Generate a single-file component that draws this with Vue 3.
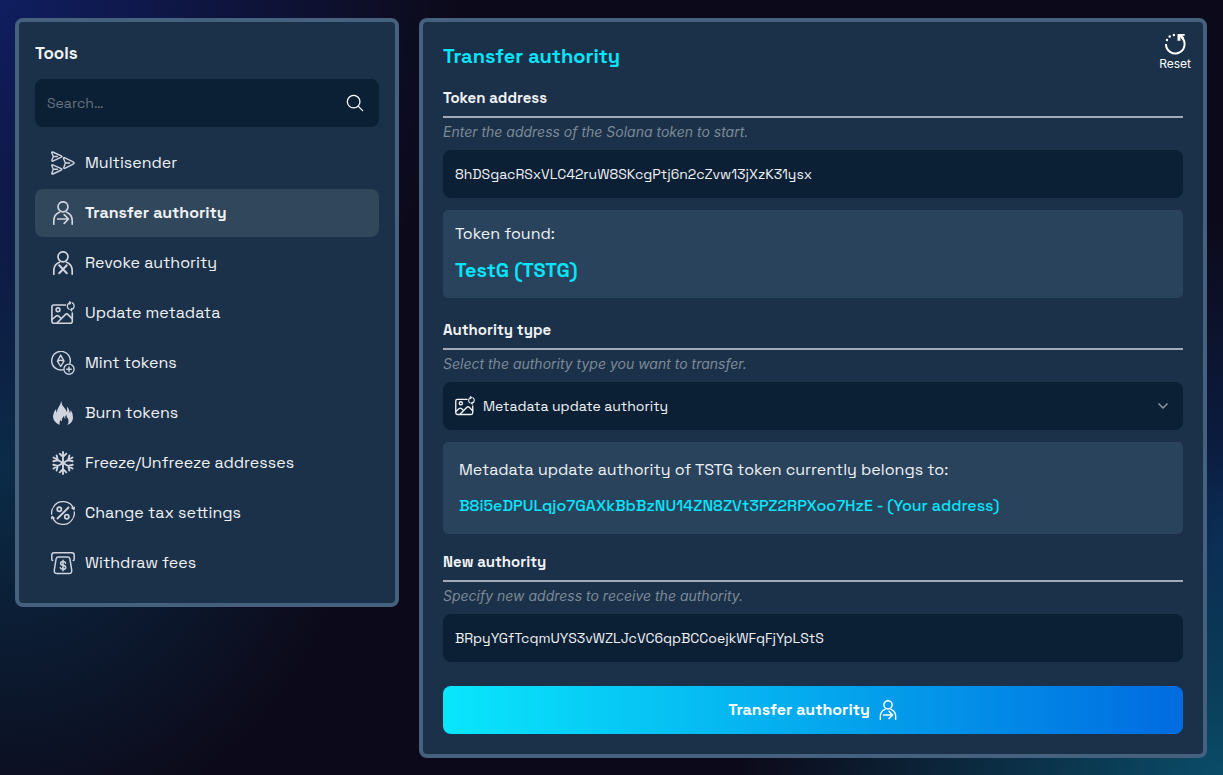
<script setup>
import { ref } from 'vue'

const tools = [
  { name: 'Multisender', icon: 'send' },
  { name: 'Transfer authority', icon: 'transfer' },
  { name: 'Revoke authority', icon: 'revoke' },
  { name: 'Update metadata', icon: 'image' },
  { name: 'Mint tokens', icon: 'mint' },
  { name: 'Burn tokens', icon: 'burn' },
  { name: 'Freeze/Unfreeze addresses', icon: 'freeze' },
  { name: 'Change tax settings', icon: 'tax' },
  { name: 'Withdraw fees', icon: 'withdraw' }
]
const active = ref('Transfer authority')
const search = ref('')
const token = ref('8hDSgacRSxVLC42ruW8SKcgPtj6n2cZvw13jXzK31ysx')
const authority = ref('Metadata update authority')
const newAuthority = ref('BRpyYGfTcqmUYS3vWZLJcVC6qpBCCoejkWFqFjYpLStS')
</script>

<template>
  <svg class="sprite" aria-hidden="true">
    <symbol id="send" viewBox="0 0 24 24">
      <g fill="none" stroke="currentColor" stroke-width="1.4" stroke-linejoin="round" stroke-linecap="round">
        <path d="M1.700 1 10.300 4.800q1.200.7 0 1.400L1.900 10.200Q.6 10.500.9 9.200L2.300 5.500.8 2Q.6.6 1.700 1ZM2.300 5.500h4.200" />
        <path d="M1.700 13.800 10.300 17.600q1.200.7 0 1.400L1.900 23Q.6 23.300.9 22L2.300 18.300.8 14.800q-.2-1.400.9-1ZM2.300 18.300h4.200" />
        <path d="M13.500 6.600 22.600 11.200q1.100.8 0 1.600L13.800 17.400q-1.300.3-1-1L14.400 12 12.600 7.800q-.3-1.500.9-1.200ZM14.400 12h4.200" />
      </g>
    </symbol>
    <symbol id="transfer" viewBox="0 0 24 24">
      <g fill="none" stroke="currentColor" stroke-width="1.700" stroke-linecap="round" stroke-linejoin="round">
        <circle cx="12" cy="5.800" r="5" />
        <path d="M2.800 23.200v-3.200Q2.800 13.300 8.400 11.300M15.600 11.300Q21.200 13.300 21.200 20v3.200M6.700 18h10.600M13.200 13.600l4.300 4.400-4.300 4.300" />
      </g>
    </symbol>
    <symbol id="revoke" viewBox="0 0 24 24">
      <g fill="none" stroke="currentColor" stroke-width="1.700" stroke-linecap="round" stroke-linejoin="round">
        <circle cx="12" cy="5.800" r="5" />
        <path d="M2.800 23.200v-3.200Q2.800 13.300 8.400 11.300M15.600 11.300Q21.200 13.300 21.200 20v3.200" />
        <path d="m8.200 14.200 7.600 8M15.800 14.200l-7.600 8" stroke-width="2" />
      </g>
    </symbol>
    <symbol id="image" viewBox="0 0 24 24">
      <g fill="none" stroke="currentColor" stroke-width="1.600" stroke-linejoin="round" stroke-linecap="round">
        <path d="M14.500 4H2.800Q.9 4 .9 6v14.200q0 2 2 2h16.400q2 0 2-2V12" />
        <circle cx="7" cy="8.800" r="1.900" />
        <path d="m1 18.500 4-3.400q1.300-1 2.600 0l2.400 2M6 22l8.300-8.400q1.400-1.300 2.800 0l4 4" />
        <path d="M18 8.300a3.800 3.800 0 0 1 .9-6.700M21.400 1.900a3.800 3.800 0 0 1-.9 6.800M18.700.7l1 1-1 1.400M20.700 9.900l-1-1.200 1.200-1.200" stroke-width="1.300" />
      </g>
    </symbol>
    <symbol id="mint" viewBox="0 0 24 24">
      <g fill="none" stroke="currentColor" stroke-width="1.400" stroke-linejoin="round" stroke-linecap="round">
        <path d="M18.900 12.300A9.300 9.300 0 1 0 12.600 18.600" />
        <circle cx="18" cy="18.200" r="5.100" />
        <path d="M18 15.900v4.600M15.700 18.200h4.600M9.700 4.200l-3.300 6 3.300 5.300 3.300-5.300ZM6.700 10.200l3-1 3 1" />
      </g>
    </symbol>
    <symbol id="burn" viewBox="0 0 24 24">
      <path fill="currentColor" d="M10.200 0q.1 4 3.700 7.600 1.500 1.700 1.800 3.600.8-2.600.2-5.800 2.600 2.300 3 6.500.8-1.100.8-3.200Q22 12.500 22 16.500q0 5.200-5.600 7.500 2.100-3.700.3-6.700-1.200-1.200-1.200-3.500-1.500 1.100-1.300 4.200-1-1-1.200-3.200-2.600 3.200-2.300 5.600-.9-.5-1.200-1.700-1.500 2.500-.9 5.300Q2 21 2 15.200q0-3.800 3-7.200.1 2.500.9 4Q6 8.500 8 5.600 9.700 3.300 10.200 0Z" />
    </symbol>
    <symbol id="freeze" viewBox="0 0 24 24">
      <g fill="none" stroke="currentColor" stroke-width="1.900" stroke-linecap="round">
        <g id="flake-axis"><path d="M12 1v22M8.700 2.700 12 6l3.300-3.300M8.700 21.300 12 18l3.300 3.300" /></g>
        <use href="#flake-axis" transform="rotate(60 12 12)" />
        <use href="#flake-axis" transform="rotate(120 12 12)" />
      </g>
    </symbol>
    <symbol id="tax" viewBox="0 0 24 24">
      <g fill="none" stroke="currentColor" stroke-width="1.300" stroke-linecap="round" stroke-linejoin="round">
        <path d="M2.300 6.300a11.300 11.300 0 0 1 20.500 1.900M21.700 17.700A11.300 11.300 0 0 1 1.200 15.800M.7 13.200Q.3 10 1.500 7.700M23.300 10.800q.4 3.300-.9 5.600M20.900 6.900l2 1.600.8-2.300M3.100 17.100l-2-1.600-.8 2.200" />
        <path d="M17.500 6.500 6.500 17.500" stroke-width="1.800" />
        <circle cx="8.300" cy="8.300" r="2.100" stroke-width="1.700" />
        <circle cx="15.800" cy="15.800" r="2.100" stroke-width="1.700" />
      </g>
    </symbol>
    <symbol id="withdraw" viewBox="0 0 24 24">
      <g fill="none" stroke="currentColor" stroke-width="1.500" stroke-linecap="round" stroke-linejoin="round">
        <path d="M1.700 9.500Q.8 9.500.8 8V4.200q0-2.400 2.400-2.400h17.600q2.400 0 2.400 2.400V8q0 1.500-1 1.500M7.400 6h9.200q1.900 0 2.300 1.800l1.800 11.300q.4 3.400-2.800 3.400H6.100q-3.200 0-2.800-3.400L5.100 7.800Q5.500 6 7.400 6Z" />
        <path d="M14.600 12.100q-.6-1.500-2.600-1.500-2.400 0-2.400 1.800 0 1.500 2.400 1.900 2.700.4 2.700 2.100 0 1.900-2.700 1.900-2.200 0-2.700-1.700M12 9.300v10.400" />
      </g>
    </symbol>
  </svg>

  <div class="page">
    <aside class="card tools">
      <h2>Tools</h2>
      <div class="field search">
        <input v-model="search" type="text" placeholder="Search…" aria-label="Search tools" />
        <svg viewBox="0 0 20 20" aria-hidden="true">
          <circle cx="8.500" cy="8.500" r="7" />
          <path d="m13.500 13.500 5 5" />
        </svg>
      </div>
      <nav>
        <a
          v-for="t in tools"
          :key="t.name"
          href="#"
          :class="{ active: t.name === active }"
          @click.prevent="active = t.name"
        >
          <svg aria-hidden="true"><use :href="'#' + t.icon" /></svg>
          <span>{{ t.name }}</span>
        </a>
      </nav>
    </aside>

    <main class="card">
      <h1>Transfer authority</h1>
      <button class="reset" type="button">
        <svg viewBox="0 0 24 24" aria-hidden="true">
          <path class="arc" d="M3 12a9.300 9.300 0 1 0 15.800-6.500" />
          <path class="fill" d="M14.500 2h7.200v1.800h-2.300l2 2.200-1.500 1.600-2.500-2.400v3.600h-2.900Z" />
          <circle class="fill" cx="4" cy="8" r="1.200" />
          <circle class="fill" cx="6.700" cy="4.500" r="1.200" />
          <circle class="fill" cx="10.900" cy="3" r="1.200" />
        </svg>
        <span>Reset</span>
      </button>

      <section>
        <label class="heading" for="token">Token address</label>
        <p class="hint">Enter the address of the Solana token to start.</p>
        <div class="field"><input id="token" v-model="token" type="text" /></div>
        <div class="info found">
          <p>Token found:</p>
          <strong>TestG (TSTG)</strong>
        </div>
      </section>

      <section>
        <label class="heading" for="type">Authority type</label>
        <p class="hint">Select the authority type you want to transfer.</p>
        <div class="field select">
          <svg class="kind" aria-hidden="true"><use href="#image" /></svg>
          <select id="type" v-model="authority">
            <option>Metadata update authority</option>
            <option>Mint authority</option>
            <option>Freeze authority</option>
          </select>
          <svg class="chevron" viewBox="0 0 12 12" aria-hidden="true"><path d="m1.500 3.500 4.500 4.500 4.500-4.500" /></svg>
        </div>
        <div class="info owner">
          <p>Metadata update authority of TSTG token currently belongs to:</p>
          <strong>B8i5eDPULqjo7GAXkBbBzNU14ZN8ZVt3PZ2RPXoo7HzE - (Your address)</strong>
        </div>
      </section>

      <section>
        <label class="heading" for="new">New authority</label>
        <p class="hint">Specify new address to receive the authority.</p>
        <div class="field"><input id="new" v-model="newAuthority" type="text" /></div>
      </section>

      <button class="submit" type="button">
        <span>Transfer authority</span>
        <svg aria-hidden="true"><use href="#transfer" /></svg>
      </button>
    </main>
  </div>
</template>

<style>
body {
  background: #0c0a1a;
}
</style>

<style scoped>
.sprite {
  position: absolute;
  width: 0;
  height: 0;
}
.page {
  box-sizing: border-box;
  min-height: 100vh;
  padding: 18px 16px 16px 15px;
  display: flex;
  align-items: flex-start;
  gap: 20px;
  color: #f0f2f5;
  font: 16px/24px "Space Grotesk", Inter, sans-serif;
  background:
    radial-gradient(ellipse 460px 480px at 0 0, #101e60, transparent),
    radial-gradient(ellipse 360px 380px at 0 460px, #0b2c48, transparent),
    radial-gradient(ellipse 480px 320px at 100% 100%, #0a4c68, transparent),
    radial-gradient(ellipse 140px 320px at 100% 540px, #0b2450, transparent),
    #0c0a1a;
}
.card {
  box-sizing: border-box;
  border: 4px solid #45617d;
  border-radius: 8px;
  background: #1b3149;
}
.tools {
  flex: 0 0 384px;
  padding: 16px;
}
h1,
h2,
p {
  margin: 0;
}
h2 {
  font-size: 17px;
  line-height: 30px;
  margin-bottom: 11px;
}
.field {
  display: flex;
  align-items: center;
  height: 48px;
  border-radius: 8px;
  background: #0b2035;
}
.field input,
.field select {
  box-sizing: border-box;
  flex: 1;
  min-width: 0;
  height: 100%;
  padding: 0 12px;
  border: 0;
  outline: 0;
  color: inherit;
  background: transparent;
  font-family: inherit;
  font-size: 14px;
  appearance: none;
}
.field input::placeholder {
  color: #66717e;
  opacity: 1;
}
.search svg {
  width: 18px;
  height: 18px;
  margin-right: 15px;
  fill: none;
  stroke: #fff;
  stroke-width: 1.400;
  stroke-linecap: round;
}
nav {
  display: grid;
  gap: 2px;
  margin-top: 12px;
}
nav a {
  display: flex;
  align-items: center;
  gap: 10px;
  height: 48px;
  padding: 0 16px;
  border-radius: 8px;
  color: inherit;
  text-decoration: none;
}
nav a svg {
  width: 24px;
  height: 24px;
  color: #d0d4de;
}
nav a.active {
  background: #31475b;
  font-weight: 700;
}
main {
  position: relative;
  flex: 1;
  min-width: 0;
  padding: 20px;
}
h1 {
  color: #08e4fa;
  font-size: 20px;
  line-height: 28px;
  margin-bottom: 16px;
}
.reset {
  position: absolute;
  top: 10px;
  right: 12px;
  display: grid;
  justify-items: center;
  padding: 0;
  border: 0;
  color: #fff;
  background: none;
  font: 12px/16px Inter, sans-serif;
}
.reset svg {
  width: 24px;
  height: 24px;
}
.arc {
  fill: none;
  stroke: currentColor;
  stroke-width: 2;
}
.fill {
  fill: currentColor;
}
section + section {
  margin-top: 20px;
}
section:nth-of-type(3) {
  margin-top: 16px;
}
.heading {
  display: block;
  padding-bottom: 6px;
  border-bottom: 2px solid #a3aab8;
  font-size: 15px;
  font-weight: 700;
}
.hint {
  margin: 4px 0 8px;
  color: #7c8997;
  font-family: Inter, sans-serif;
  font-size: 14px;
  line-height: 20px;
  font-style: italic;
}
.info {
  display: grid;
  margin-top: 12px;
  border-radius: 5px;
  background: #29435d;
}
.info strong {
  color: #08e4fa;
  overflow-wrap: anywhere;
}
.found {
  padding: 12px;
  gap: 8px;
}
.found strong {
  font-size: 20px;
  line-height: 32px;
}
.owner {
  padding: 16px;
  gap: 12px;
}
.info.owner strong {
  font-weight: 500;
}
.kind {
  width: 20px;
  height: 20px;
  margin-left: 12px;
}
.field select {
  padding: 0 8px;
}
.chevron {
  width: 12px;
  height: 12px;
  margin-right: 14px;
  fill: none;
  stroke: #8b97a5;
  stroke-width: 1.500;
}
.submit {
  display: flex;
  align-items: center;
  justify-content: center;
  gap: 8px;
  width: 100%;
  height: 48px;
  margin-top: 24px;
  padding: 0;
  border: 0;
  border-radius: 8px;
  color: #fff;
  background: linear-gradient(90deg, #09e7fc, #006be0);
  font: 700 16px/24px "Space Grotesk", Inter, sans-serif;
}
.submit svg {
  width: 20px;
  height: 20px;
}
</style>
